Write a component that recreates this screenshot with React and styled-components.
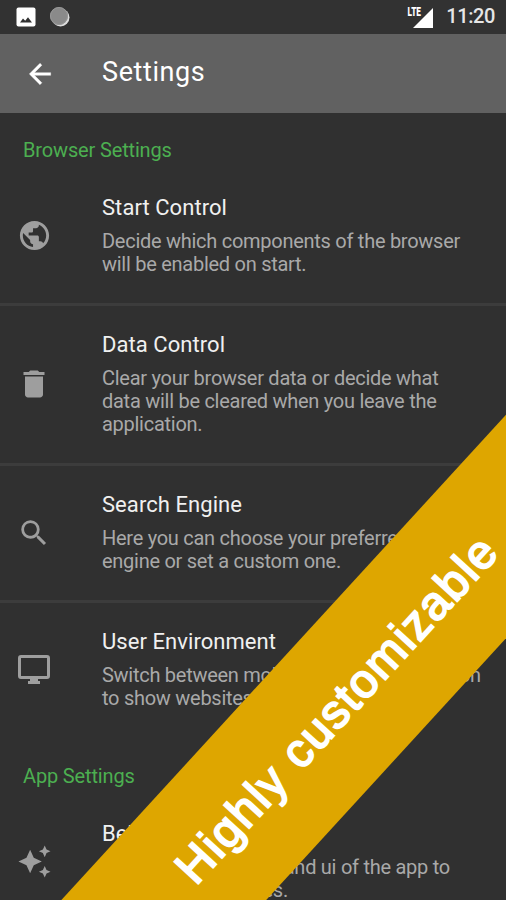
import React from 'react';
import styled, { createGlobalStyle } from 'styled-components';
import {
  MdArrowBack,
  MdPublic,
  MdDelete,
  MdSearch,
  MdAutoAwesome,
} from 'react-icons/md';

const GlobalStyle = createGlobalStyle`
  body {
    margin: 0;
    background: #303030;
    font-family: Roboto, sans-serif;
    overflow: hidden;
  }
`;

const Screen = styled.div`
  position: relative;
  width: 506px;
  height: 900px;
  overflow: hidden;
  background: #303030;
`;

const StatusBar = styled.header`
  display: flex;
  align-items: center;
  justify-content: space-between;
  box-sizing: border-box;
  height: 34px;
  padding: 0 11px 0 16px;
  background: #323232;
`;

const StatusGroup = styled.div`
  display: flex;
  align-items: center;
  gap: ${({ $gap }) => $gap}px;
`;

const Clock = styled.span`
  color: #e6e6e6;
  font-size: 20px;
  font-weight: 500;
  line-height: 32px;
  letter-spacing: -0.4px;
  padding-bottom: 2px;
`;

const Toolbar = styled.nav`
  display: flex;
  align-items: center;
  box-sizing: border-box;
  height: 79px;
  padding: 0 24px;
  background: #616161;
  color: #fff;

  svg {
    flex: none;
    stroke: none;
  }

  path:last-child {
    stroke: #fff;
    stroke-width: 0.3px;
  }
`;

const ToolbarTitle = styled.h1`
  margin: 0 0 3px 46px;
  font-size: 27px;
  font-weight: 400;
  line-height: 32px;
  letter-spacing: 0.6px;
`;

const GroupTitle = styled.h2`
  box-sizing: border-box;
  height: 56px;
  margin: 0;
  padding: 20px 23px 0;
  color: #4caf50;
  font-size: 20px;
  font-weight: 400;
  line-height: 34px;
  letter-spacing: -0.15px;
`;

const Row = styled.div`
  display: flex;
  align-items: center;
  box-sizing: border-box;
  padding: 24px 0 27px;
  border-bottom: ${({ $last }) => ($last ? '2px solid transparent' : '3px solid #3c3c3c')};
`;

const RowIcon = styled.div`
  display: flex;
  flex: none;
  justify-content: center;
  width: 68px;
  margin-right: 34px;
  padding-top: 2px;
  color: #9e9e9e;
`;

const RowTitle = styled.h3`
  margin: 0 0 8px;
  color: #f0f0f0;
  font-size: 22px;
  font-weight: 400;
  line-height: 29px;
  letter-spacing: 0.06px;
`;

const RowText = styled.p`
  margin: 0;
  color: #a9a9a9;
  font-size: 20px;
  font-weight: 400;
  line-height: 23px;
  letter-spacing: -0.27px;
  white-space: pre-line;
`;

// diagonal banner over the lower right corner
const Ribbon = styled.div`
  position: absolute;
  top: 618px;
  left: -97px;
  display: flex;
  align-items: center;
  justify-content: center;
  box-sizing: border-box;
  width: 900px;
  height: 151px;
  padding: 0 45px 4px 0;
  background: #dea600;
  transform: rotate(-47.5deg);
`;

const RibbonText = styled.span`
  color: #fff;
  font-family: 'Liberation Sans', sans-serif;
  font-size: 47px;
  letter-spacing: 1.8px;
  -webkit-text-stroke: 2px #fff;
  white-space: nowrap;
`;

const PhotoIcon = () => (
  <svg width="20" height="20" viewBox="0 0 20 20">
    <rect x="0.5" y="0.5" width="19" height="19" rx="2" fill="#fff" />
    <path d="M4 15.5l3-4 2.2 2.3 2.8-3.6 4 5.3z" fill="#303030" />
  </svg>
);

const SyncIcon = () => (
  <svg width="22" height="22" viewBox="0 0 22 22">
    <circle cx="11.5" cy="11.5" r="9" fill="#dcdcdc" />
    <circle cx="10" cy="10" r="9" fill="#8a8a8a" />
    <circle cx="10" cy="10" r="8.5" fill="none" stroke="#989898" />
  </svg>
);

const SignalIcon = () => (
  <svg width="28" height="24" viewBox="0 0 28 24">
    <path d="M27 3v20H7z" fill="#fff" />
    <text
      x="1.5"
      y="11"
      fill="#fff"
      stroke="#323232"
      strokeWidth="1"
      paintOrder="stroke"
      fontFamily="Roboto, sans-serif"
      fontSize="12"
      fontWeight="900"
      textLength="13.5"
      lengthAdjust="spacingAndGlyphs"
    >
      LTE
    </text>
  </svg>
);

const MonitorIcon = () => (
  <svg width="34" height="32" viewBox="0 0 34 32" fill="none">
    <rect x="2.5" y="2.5" width="29" height="21" rx="1.5" stroke="#9e9e9e" strokeWidth="3" />
    <path d="M13 24h8v3h2v3H11v-3h2z" fill="#9e9e9e" />
  </svg>
);

const browserRows = [
  {
    icon: <MdPublic size={35} />,
    title: 'Start Control',
    text: 'Decide which components of the browser\nwill be enabled on start.',
  },
  {
    icon: <MdDelete size={36} />,
    title: 'Data Control',
    text: 'Clear your browser data or decide what\ndata will be cleared when you leave the\napplication.',
  },
  {
    icon: <MdSearch size={34} />,
    title: 'Search Engine',
    text: 'Here you can choose your preferred search\nengine or set a custom one.',
  },
  {
    icon: <MonitorIcon />,
    title: 'User Environment',
    text: 'Switch between mobile and desktop version\nto show websites.',
  },
];

const appRows = [
  {
    icon: <MdAutoAwesome size={35} />,
    title: 'Behavior',
    text: 'Change the behavior and ui of the app to\nsuit your preferences.',
  },
];

const Group = ({ title, rows }) => (
  <section>
    <GroupTitle>{title}</GroupTitle>
    {rows.map((row, i) => (
      <Row key={row.title} $last={i === rows.length - 1}>
        <RowIcon>{row.icon}</RowIcon>
        <div>
          <RowTitle>{row.title}</RowTitle>
          <RowText>{row.text}</RowText>
        </div>
      </Row>
    ))}
  </section>
);

const App = () => (
  <>
    <GlobalStyle />
    <Screen>
      <StatusBar>
        <StatusGroup $gap={13}>
          <PhotoIcon />
          <SyncIcon />
        </StatusGroup>
        <StatusGroup $gap={12}>
          <SignalIcon />
          <Clock>11:20</Clock>
        </StatusGroup>
      </StatusBar>
      <Toolbar>
        <MdArrowBack size={32} />
        <ToolbarTitle>Settings</ToolbarTitle>
      </Toolbar>
      <Group title="Browser Settings" rows={browserRows} />
      <Group title="App Settings" rows={appRows} />
      <Ribbon>
        <RibbonText>Highly customizable</RibbonText>
      </Ribbon>
    </Screen>
  </>
);

export default App;
